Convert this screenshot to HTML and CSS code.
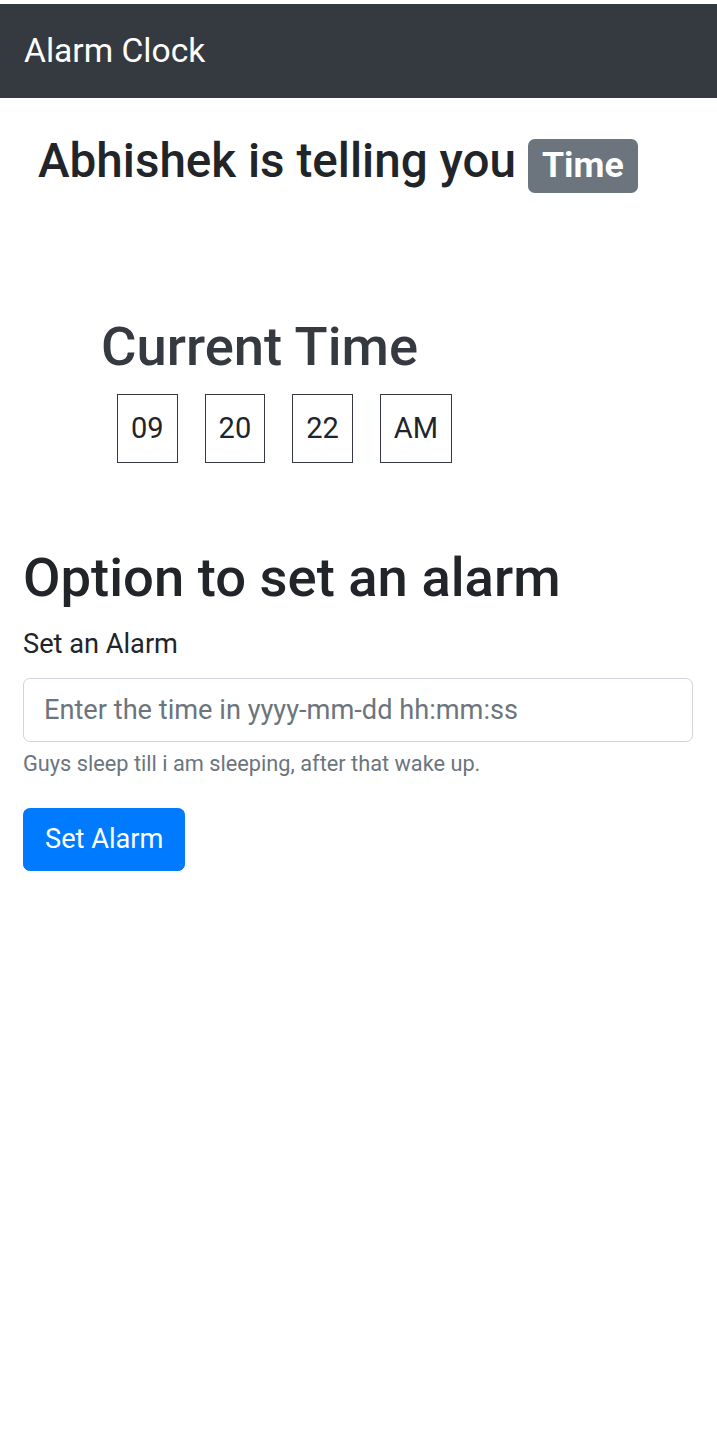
FILE: index.html
```html
<!DOCTYPE html>
<html lang="en">
<head>
<meta charset="utf-8">
<title>Alarm Clock</title>
<link rel="stylesheet" href="styles.css">
</head>
<body>
<nav class="navbar">
  <a class="brand" href="#">Alarm Clock</a>
</nav>
<main class="container">
  <h3 class="intro">Abhishek is telling you <span class="badge">Time</span></h3>

  <section class="clock">
    <h2 class="clock-title">Current Time</h2>
    <div class="clock-row">
      <span class="unit">09</span>
      <span class="unit">20</span>
      <span class="unit">22</span>
      <span class="unit">AM</span>
    </div>
  </section>

  <section class="alarm">
    <h2 class="alarm-title">Option to set an alarm</h2>
    <div class="form-group">
      <label class="label" for="alarm">Set an Alarm</label>
      <input class="input" id="alarm" type="text" placeholder="Enter the time in yyyy-mm-dd hh:mm:ss">
      <small class="help">Guys sleep till i am sleeping, after that wake up.</small>
    </div>
    <button class="btn" type="button">Set Alarm</button>
  </section>
</main>
</body>
</html>
```

FILE: styles.css
```css
* { box-sizing: border-box; }

html {
  font-size: 27.2px;
}

html, body {
  margin: 0;
  padding: 0;
  background: #fff;
}

body {
  font-family: Roboto, "Liberation Sans", sans-serif;
  font-size: 1rem;
  line-height: 1.5;
  color: #212529;
}

.navbar {
  margin-top: 4px;
  background: #343a40;
  display: flex;
  align-items: center;
  padding: 13.44px 24px;
}

.brand {
  color: #fff;
  text-decoration: none;
  font-size: 33.6px;
  line-height: 1.5;
  padding: 8.4px 0;
}

.container {
  padding: 0 24px 0 23px;
}

h2, h3 {
  font-weight: 500;
  line-height: 1.2;
  margin: 0;
}

.intro {
  font-size: 47.6px;
  margin: 35px 0 0 15px;
}

.badge {
  display: inline-block;
  background: #6c757d;
  color: #fff;
  font-size: 75%;
  font-weight: 700;
  line-height: 1;
  padding: 0.25em 0.4em;
  border-radius: 6.8px;
  vertical-align: baseline;
}

.clock {
  margin: 121px 0 0 78px;
}

.clock-title {
  font-size: 54.4px;
  color: #343a40;
}

.clock-row {
  display: flex;
  gap: 27px;
  margin: 15px 0 0 16px;
}

.unit {
  display: block;
  padding: 12px 13px;
  border: 1px solid #343a40;
  font-size: 29px;
  line-height: 1.5;
  color: #212529;
}

.alarm {
  margin-top: 82px;
}

.alarm-title {
  font-size: 54.4px;
  margin-bottom: 13px;
}

.form-group {
  display: flex;
  flex-direction: column;
  margin-bottom: 27px;
}

.label {
  display: block;
  margin-bottom: 13px;
}

.input {
  width: 100%;
  height: 64px;
  padding: 0 20px;
  border: 1px solid #ced4da;
  border-radius: 6.8px;
  font-family: inherit;
  font-size: 1rem;
  color: #495057;
  background: #fff;
}

.input::placeholder {
  color: #6c757d;
  opacity: 1;
}

.help {
  display: block;
  margin-top: 6.8px;
  font-size: 80%;
  line-height: 1.5;
  color: #6c757d;
}

.btn {
  display: inline-block;
  padding: 10.2px 21px;
  border: 1px solid #007bff;
  border-radius: 6.8px;
  background: #007bff;
  color: #fff;
  font-family: inherit;
  font-size: 1rem;
  line-height: 1.5;
  cursor: pointer;
}
```
